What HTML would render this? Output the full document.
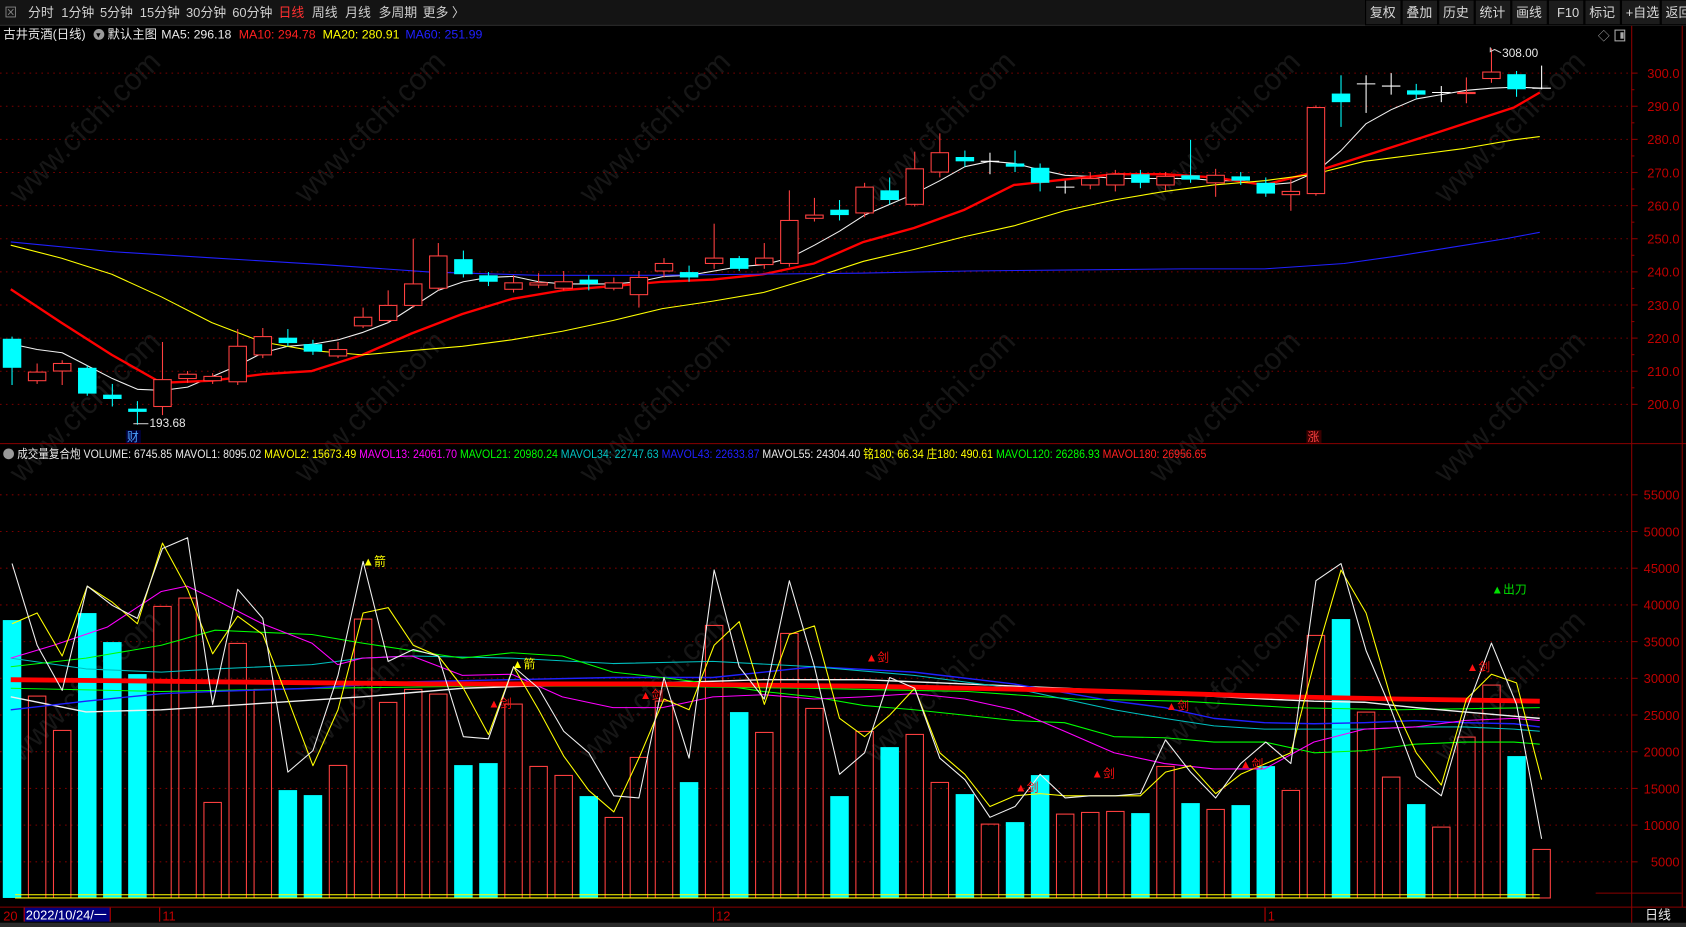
<!DOCTYPE html>
<html><head><meta charset="utf-8">
<style>
html,body{margin:0;padding:0;background:#000;overflow:hidden}
svg{display:block}
text{font-family:"Liberation Sans","Noto Sans CJK SC",sans-serif}
</style></head>
<body>
<svg id="s" xmlns="http://www.w3.org/2000/svg" width="1686" height="927" viewBox="0 0 1568 862" preserveAspectRatio="none">
<rect width="1568" height="862" fill="#000"/>
<g id="wm" fill="#161616" font-size="28"></g>
<!-- top bar -->
<rect x="0" y="0" width="1568" height="23" fill="#141414"/>
<line x1="0" y1="23.5" x2="1568" y2="23.5" stroke="#333"/>
<g font-size="12" fill="#d0d0d0">
<text x="4" y="16" fill="#888">⊠</text>
<text x="26" y="16">分时</text><text x="57" y="16">1分钟</text><text x="93" y="16">5分钟</text>
<text x="130" y="16">15分钟</text><text x="173" y="16">30分钟</text><text x="216" y="16">60分钟</text>
<text x="259" y="16" fill="#ff3030">日线</text><text x="290" y="16">周线</text><text x="321" y="16">月线</text>
<text x="352" y="16">多周期</text><text x="393" y="16">更多 〉</text>
</g>
<g id="btns" font-size="12" fill="#d8d8d8"></g>
<!-- legend -->
<g font-size="11.5">
<text x="3" y="36" fill="#e8e8e8">古井贡酒(日线)</text>
<circle cx="92" cy="32" r="5" fill="#999"/><text x="88" y="35" font-size="7" fill="#000">▼</text>
<text x="100" y="36" fill="#e8e8e8">默认主图</text>
<text x="150" y="36" fill="#e8e8e8">MA5: 296.18</text>
<text x="222" y="36" fill="#ff2020">MA10: 294.78</text>
<text x="300" y="36" fill="#ffff00">MA20: 280.91</text>
<text x="377" y="36" fill="#2020ff">MA60: 251.99</text>
<text x="1486" y="37" fill="#aaa" font-size="11">◇</text>
<rect x="1502" y="28" width="9" height="10" fill="none" stroke="#aaa"/><rect x="1507" y="30" width="3" height="6" fill="#aaa"/>
</g>
<!-- axes -->
<line x1="1517.5" y1="24" x2="1517.5" y2="858" stroke="#8a0000"/>
<line x1="1564.5" y1="24" x2="1564.5" y2="843" stroke="#8a0000"/>
<line x1="0" y1="412.5" x2="1568" y2="412.5" stroke="#8a0000"/>
<line x1="0" y1="843.5" x2="1568" y2="843.5" stroke="#8a0000"/>
<line x1="1484" y1="830.5" x2="1564" y2="830.5" stroke="#8a0000"/>
<g id="grid"></g>
<g id="lines"></g>
<g id="cand"></g>
<g id="vol"></g>
<g id="vlines"></g>
<!-- markers -->
<g font-size="11">
<text x="337" y="526" fill="#ffff00">▲箭</text>
<text x="476" y="621" fill="#ffff00">▲箭</text>
<text x="454" y="658" fill="#ff1010">▲剑</text>
<text x="595" y="650" fill="#ff1010">▲剑</text>
<text x="805" y="615" fill="#ff1010">▲剑</text>
<text x="944" y="736" fill="#ff1010">▲剑</text>
<text x="1015" y="723" fill="#ff1010">▲剑</text>
<text x="1084" y="660" fill="#ff1010">▲剑</text>
<text x="1153" y="714" fill="#ff1010">▲剑</text>
<text x="1364" y="624" fill="#ff1010">▲剑</text>
<text x="1387" y="552" fill="#00e000">▲出刀</text>
<text x="1397" y="53" fill="#e8e8e8">308.00</text>
<polyline points="1386,44 1386,48 1390,46 1396,49" fill="none" stroke="#ccc"/>
<text x="139" y="397" fill="#e8e8e8">193.68</text>
<line x1="124" y1="394" x2="138" y2="394" stroke="#ccc"/>
<rect x="117" y="400" width="14" height="12" fill="#00003a"/><text x="118" y="410" fill="#4aa0ff" font-size="11">财</text>
<rect x="1215" y="400" width="14" height="12" fill="#3a0000"/><text x="1216" y="410" fill="#ff4040" font-size="11">涨</text>
</g>
<!-- volume legend -->
<circle cx="8" cy="422" r="5" fill="#999"/>
<text x="16" y="426" font-size="11" textLength="1106" lengthAdjust="spacingAndGlyphs"><tspan fill="#e8e8e8">成交量复合炮 VOLUME: 6745.85 MAVOL1: 8095.02 </tspan><tspan fill="#ffff00">MAVOL2: 15673.49 </tspan><tspan fill="#ff00ff">MAVOL13: 24061.70 </tspan><tspan fill="#00ff00">MAVOL21: 20980.24 </tspan><tspan fill="#00c0c0">MAVOL34: 22747.63 </tspan><tspan fill="#2020ff">MAVOL43: 22633.87 </tspan><tspan fill="#e8e8e8">MAVOL55: 24304.40 </tspan><tspan fill="#ffff00">铭180: 66.34 庄180: 490.61 </tspan><tspan fill="#00ff00">MAVOL120: 26286.93 </tspan><tspan fill="#ff2020">MAVOL180: 26956.65</tspan></text>
<!-- bottom -->
<g font-size="12">
<text x="3" y="856" fill="#c00000">20</text>
<rect x="22" y="844" width="80" height="13" fill="#000080"/>
<line x1="22.5" y1="844" x2="22.5" y2="857" stroke="#c00000"/><line x1="102.5" y1="844" x2="102.5" y2="857" stroke="#c00000"/>
<text x="24" y="855" fill="#fff">2022/10/24/一</text>
<line x1="148.5" y1="844" x2="148.5" y2="857" stroke="#c00000"/><text x="151" y="856" fill="#c00000">11</text>
<line x1="663.5" y1="844" x2="663.5" y2="857" stroke="#c00000"/><text x="666" y="856" fill="#c00000">12</text>
<line x1="1176.5" y1="844" x2="1176.5" y2="857" stroke="#c00000"/><text x="1179" y="856" fill="#c00000">1</text>
<text x="1530" y="855" fill="#e8e8e8">日线</text>
</g>
<rect x="0" y="858" width="1568" height="4" fill="#2a2a2a"/>
</svg>
<script>
const NS="http://www.w3.org/2000/svg";
function el(p,t,a,txt){const e=document.createElementNS(NS,t);for(const k in a)e.setAttribute(k,a[k]);if(txt!==undefined)e.textContent=txt;document.getElementById(p).appendChild(e);return e;}
const bl=["复权","叠加","历史","统计","画线","F10","标记","+自选","返回"];
let bx=1270;
bl.forEach((b,i)=>{const w=b.length>2||b=="F10"?(b=="F10"?33:36):33;el("btns","rect",{x:bx,y:0,width:w,height:23,fill:"#1c1c1c",stroke:"#000"});el("btns","text",{x:bx+(b=="F10"?8:4),y:16},b);bx+=w+1;});
for(let r=0;r<3;r++)for(let c=0;c<6;c++){el("wm","text",{x:0,y:0,transform:`translate(${20+c*265},${190+r*260}) rotate(-45)`},"www.cfchi.com");}
for(let p=200;p<=300;p+=10){const y=68+(300-p)*3.08;el("grid","line",{x1:0,y1:y,x2:1517,y2:y,stroke:"#7a0000","stroke-dasharray":"1.5 4"});
el("grid","line",{x1:1517,y1:y,x2:1523,y2:y,stroke:"#8a0000"});el("grid","text",{x:1562,y:y+4.5,"text-anchor":"end",fill:"#c00000","font-size":"12"},p.toFixed(1));}
for(let k=0;k<10;k++){el("grid","line",{x1:1517,y1:68+k*30.8+15.4,x2:1520,y2:68+k*30.8+15.4,stroke:"#8a0000"});}
for(let v=5000;v<=55000;v+=5000){const y=801.4-(v-5000)/5000*34.13;el("grid","line",{x1:0,y1:y,x2:1517,y2:y,stroke:"#7a0000","stroke-dasharray":"1.5 4"});
el("grid","line",{x1:1517,y1:y,x2:1523,y2:y,stroke:"#8a0000"});el("grid","text",{x:1562,y:y+4.5,"text-anchor":"end",fill:"#c00000","font-size":"12"},String(v));}
const X=i=>11.2+23.32*i, W=17.2;
const C=[[315,342,313,358,'c'],[346,354,338,357,'r'],[338,345,335,358,'r'],[342,366,340,368,'c'],[367,371,357,378,'c'],[380,383,373,395,'c'],[353,378,318,386,'r'],[348,352,345,356,'r'],[350,354,347,357,'r'],[322,355,306,358,'r'],
[313,330,305,333,'r'],[314,319,306,322,'c'],[320,327,316,330,'c'],[325,331,318,333,'r'],[295,303,286,305,'r'],[284,298,270,300,'r'],[264,284,222,286,'r'],[238,268,226,270,'r'],[241,255,233,258,'c'],[256,262,253,266,'c'],
[263,269,256,272,'r'],[263,265,254,268,'r'],[262,268,252,270,'r'],[260,264,256,270,'c'],[263,268,258,270,'r'],[258,274,252,286,'r'],[245,252,240,258,'r'],[253,258,247,262,'c'],[240,245,208,250,'r'],[240,250,238,252,'c'],
[240,246,226,250,'r'],[205,245,177,248,'r'],[200,203,184,206,'r'],[195,200,186,205,'c'],[174,198,170,202,'r'],[177,186,165,190,'c'],[157,190,141,192,'r'],[142,160,124,165,'r'],[146,150,140,155,'c'],[150,151,142,162,'w'],
[152,155,140,160,'c'],[156,170,152,178,'c'],[174,175,168,180,'w'],[166,172,160,176,'r'],[162,172,158,178,'r'],[162,170,158,175,'c'],[164,172,160,177,'r'],[163,167,130,170,'c'],[163,170,157,183,'r'],[164,168,160,172,'c'],
[170,180,165,183,'c'],[178,181,167,196,'r'],[100,180,98,182,'r'],[87,95,70,118,'c'],[78,79,70,105,'w'],[80,81,68,88,'w'],[84,88,78,92,'c'],[86,87,80,95,'w'],[86,87,72,96,'r'],[67,73,45,77,'r'],
[69,83,66,90,'c'],[82,83,61,83,'w']];
C.forEach((d,i)=>{const x=X(i);const [t,b,h,l,ty]=d;
 if(ty=='c'){el("cand","line",{x1:x,y1:h,x2:x,y2:l,stroke:"#00ffff"});el("cand","rect",{x:x-W/2,y:t,width:W,height:Math.max(1,b-t),fill:"#00ffff"});}
 else if(ty=='r'){el("cand","line",{x1:x,y1:h,x2:x,y2:t,stroke:"#ff4040"});el("cand","line",{x1:x,y1:b,x2:x,y2:l,stroke:"#ff4040"});el("cand","rect",{x:x-W/2+0.5,y:t,width:W-1,height:Math.max(1,b-t),fill:"#000",stroke:"#ff4040"});}
 else{el("cand","line",{x1:x,y1:h,x2:x,y2:l,stroke:"#fff"});el("cand","line",{x1:x-W/2,y1:t,x2:x+W/2,y2:t,stroke:"#fff"});}
});
function pl(g,pts,col,w){el(g,"polyline",{points:pts.map(p=>p.join(",")).join(" "),fill:"none",stroke:col,"stroke-width":w||1,"stroke-linejoin":"round"});}
function idx(ys){return ys.map((y,i)=>[X(i),y]);}
pl("lines",idx([320,325,328,340,352,362,363,360,350,340,328,322,320,316,309,300,285,270,262,258,257,262,264,264,264,262,257,256,252,248,246,240,228,215,200,190,180,168,155,150,152,158,163,164,166,166,166,166,168,168,172,170,160,140,115,102,92,88,84,82,81,82]),"#f0f0f0",1);
pl("lines",[[10,269],[57,300],[104,330],[150,356],[197,354],[244,348],[290,345],[337,330],[383,310],[430,292],[476,278],[523,270],[570,266],[616,262],[663,260],[710,255],[757,245],[803,225],[850,212],[897,195],[943,172],[990,167],[1036,162],[1083,162],[1129,165],[1176,172],[1222,160],[1269,145],[1316,130],[1362,115],[1408,100],[1432,86]],"#ff0000",2.2);
pl("lines",[[10,228],[57,240],[104,255],[150,276],[197,300],[244,318],[290,326],[337,330],[383,326],[430,322],[476,316],[523,308],[570,298],[616,287],[663,280],[710,272],[757,258],[803,243],[850,232],[897,220],[943,210],[990,196],[1036,186],[1083,178],[1129,172],[1176,168],[1222,162],[1269,150],[1316,144],[1362,138],[1408,130],[1432,127]],"#ffff00",1);
pl("lines",[[10,225],[104,234],[200,240],[300,246],[400,253],[500,256],[600,256],[700,255],[800,254],[900,252],[1000,251],[1100,250],[1176,250],[1250,245],[1300,238],[1350,230],[1400,222],[1432,216]],"#2020ff",1);
const V=[300,528,631,279,366,462,259,234,847,370,508,810,825,736,297,547,508,522,735,729,552,739,766,828,892,712,543,786,316,576,637,340,565,828,634,681,643,787,822,912,906,765,882,877,874,879,739,849,868,855,738,811,346,297,576,771,852,921,651,495,708,988];
V.forEach((z,i)=>{const y=483.6+z*0.31,x=X(i);const cy=C[i][4]=='c';
 if(cy)el("vol","rect",{x:x-W/2,y:y,width:W,height:835-y,fill:"#00ffff"});
 else el("vol","rect",{x:x-W/2+0.5,y:y,width:W-1,height:835-y,fill:"none",stroke:"#ff4040"});});
el("vol","line",{x1:14,y1:832,x2:1432,y2:832,stroke:"#ffff00"});
el("vol","line",{x1:14,y1:835,x2:1432,y2:835,stroke:"#ffff00"});
pl("vlines",[[10,640],[150,643],[300,640],[450,638],[600,638],[750,640],[900,643],[1000,650],[1100,652],[1200,658],[1300,660],[1432,658]],"#00ff00",1);
pl("vlines",[[10,648],[80,662],[150,660],[244,654],[337,648],[430,640],[523,637],[616,635],[710,632],[803,632],[897,636],[990,640],[1083,645],[1176,650],[1222,652],[1269,653],[1316,658],[1362,662],[1408,666],[1432,668]],"#f0f0f0",1.3);
pl("vlines",[[10,660],[80,652],[150,645],[200,643],[290,640],[383,634],[476,632],[570,630],[663,630],[757,620],[850,625],[943,636],[1036,652],[1083,658],[1129,668],[1176,672],[1222,673],[1269,672],[1316,670],[1362,672],[1408,673],[1432,676]],"#2020ff",1.3);
pl("vlines",[[10,612],[80,622],[150,625],[200,622],[290,618],[337,612],[383,610],[476,612],[570,617],[663,615],[757,620],[850,628],[943,640],[1036,660],[1083,668],[1129,675],[1176,678],[1222,678],[1269,678],[1316,676],[1362,676],[1408,678],[1432,680]],"#00c0c0",1);
pl("vlines",[[10,620],[80,612],[150,600],[200,586],[244,588],[290,590],[337,598],[383,605],[430,612],[476,607],[523,610],[570,625],[616,630],[663,636],[710,643],[757,648],[803,656],[850,660],[897,665],[943,670],[990,672],[1036,685],[1083,686],[1129,690],[1176,690],[1222,700],[1269,698],[1316,692],[1362,690],[1408,690],[1432,692]],"#00ff00",1);
pl("vlines",[[10,612],[50,600],[100,583],[150,550],[174,545],[197,556],[244,580],[290,598],[314,618],[337,612],[383,610],[430,628],[476,627],[523,648],[570,658],[616,658],[663,648],[710,646],[757,650],[803,648],[850,645],[897,650],[943,660],[990,680],[1036,700],[1083,710],[1129,715],[1176,715],[1222,690],[1269,678],[1316,676],[1362,670],[1408,668],[1432,670]],"#ff00ff",1);
pl("vlines",[[10,632],[200,634],[400,636],[600,636],[800,638],[1000,642],[1200,648],[1300,650],[1432,652]],"#ff0000",4.5);
pl("vlines",idx([580,570,610,545,560,580,505,548,608,573,590,650,712,660,570,565,600,610,640,683,620,660,703,735,755,705,650,660,600,578,655,590,582,668,685,665,640,700,720,750,740,738,740,740,740,740,718,712,738,720,710,700,610,530,570,650,700,730,650,627,635,725]),"#ffff00",1);
pl("vlines",idx([524,600,642,545,563,575,510,500,655,548,575,718,698,628,522,615,604,610,685,687,620,640,680,700,740,742,630,705,530,620,650,540,620,720,700,630,640,705,725,760,750,720,742,740,740,738,688,718,742,710,690,710,540,524,605,660,722,740,660,598,655,780]),"#f0f0f0",1);
</script>
</body></html>
